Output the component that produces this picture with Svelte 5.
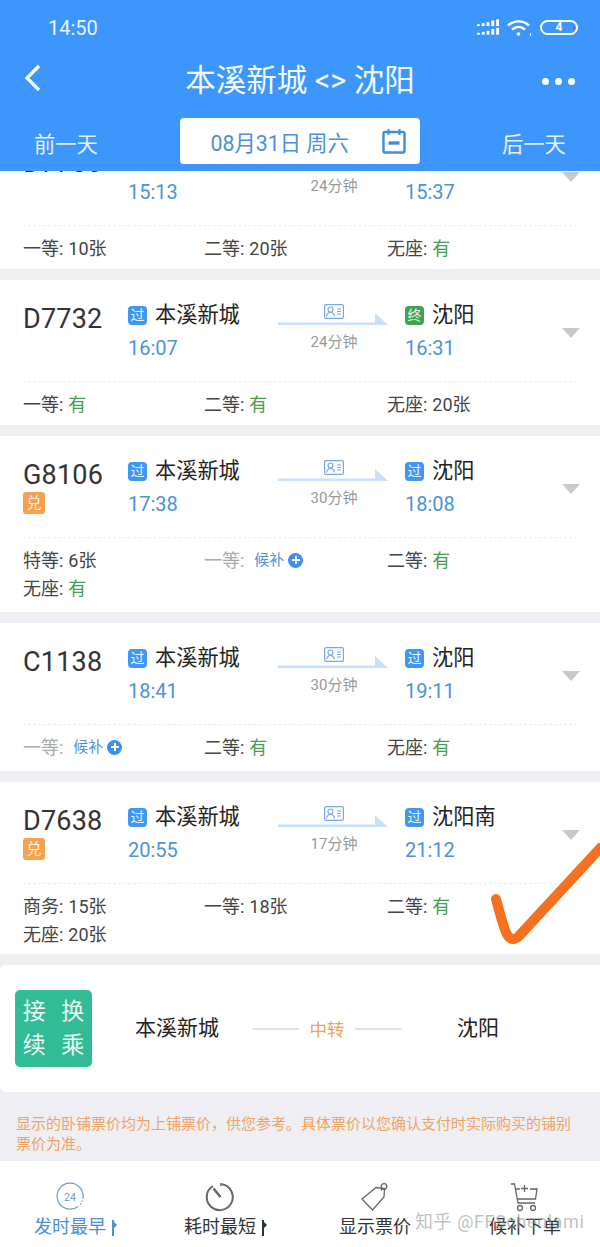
<script>
  const trains = [
    { no: 'D7730', h: 145, from: '本溪新城', fromTag: '过', to: '沈阳', toTag: '过', dep: '15:13', arr: '15:37', dur: '24分钟', seats: [[['一等', '10张']], [['二等', '20张']], [['无座', '有']]], cls: 'first' },
    { no: 'D7732', h: 145, from: '本溪新城', fromTag: '过', to: '沈阳', toTag: '终', dep: '16:07', arr: '16:31', dur: '24分钟', seats: [[['一等', '有']], [['二等', '有']], [['无座', '20张']]] },
    { no: 'G8106', h: 176, dui: true, from: '本溪新城', fromTag: '过', to: '沈阳', toTag: '过', dep: '17:38', arr: '18:08', dur: '30分钟', seats: [[['特等', '6张'], ['无座', '有']], [['一等', 'wait']], [['二等', '有']]] },
    { no: 'C1138', h: 148, from: '本溪新城', fromTag: '过', to: '沈阳', toTag: '过', dep: '18:41', arr: '19:11', dur: '30分钟', seats: [[['一等', 'wait']], [['二等', '有']], [['无座', '有']]] },
    { no: 'D7638', h: 172, dui: true, from: '本溪新城', fromTag: '过', to: '沈阳南', toTag: '过', dep: '20:55', arr: '21:12', dur: '17分钟', seats: [[['商务', '15张'], ['无座', '20张']], [['一等', '18张']], [['二等', '有']]] }
  ];
</script>

<div class="screen">
  <header class="header">
    <div class="status">
      <span class="clock">14:50</span>
      <div class="status-icons">
        <svg width="23" height="18" viewBox="0 0 24 18" fill="#fff">
          <rect x="0" y="5" width="3" height="2"/><rect x="5" y="4" width="3" height="3"/><rect x="10" y="3" width="3" height="4"/><rect x="15" y="1" width="3" height="6"/><rect x="20" y="0" width="3" height="7"/>
          <rect x="0" y="14" width="3" height="2"/><rect x="5" y="13" width="3" height="3"/><rect x="10" y="12" width="3" height="4"/><rect x="15" y="10" width="3" height="6"/><rect x="20" y="9" width="3" height="7"/>
        </svg>
        <svg class="wifi" width="25" height="18" viewBox="0 0 25 18" fill="none" stroke="#fff" stroke-width="2.4">
          <path d="M1 6.500C7 1 16 1 22 6.500"/><path d="M5 10.500C9 7 14 7 18 10.500"/><circle cx="11.500" cy="15" r="1.800" fill="#fff" stroke="none"/><rect x="23" y="14" width="1" height="3" fill="#fff" stroke="none"/>
        </svg>
        <span class="battery">4<i></i></span>
      </div>
    </div>
    <div class="nav">
      <svg class="back" width="18" height="28" viewBox="0 0 18 28" fill="none" stroke="#fff" stroke-width="3.2"><path d="M15 2 3 14l12 12"/></svg>
      <h1>本溪新城 &lt;&gt; 沈阳</h1>
      <div class="dots"><i></i><i></i><i></i></div>
    </div>
    <div class="dates">
      <span class="side">前一天</span>
      <div class="picker">
        <span>08月31日 周六</span>
        <svg width="24" height="26" viewBox="0 0 24 26" fill="none" stroke="#3d8fdc" stroke-width="2.4">
          <rect x="1.500" y="4" width="21" height="20.500" rx="1.500"/><path d="M6.500 1v6M17.500 1v6" stroke-width="2"/><path d="M6.500 15h11" stroke-width="3.400"/>
        </svg>
      </div>
      <span class="side">后一天</span>
    </div>
  </header>

  <main class="list">
    {#each trains as t}
      <section class="card {t.cls ?? ''}" style="height:{t.h}px">
        <div class="route">
          <div class="no">
            <div class="code">{t.no}</div>
            {#if t.dui}<span class="dui">兑</span>{/if}
          </div>
          <div class="stop from">
            <div class="station"><span class="tag">{t.fromTag}</span>{t.from}</div>
            <div class="time">{t.dep}</div>
          </div>
          <div class="mid">
            <svg class="id" width="20" height="15" viewBox="0 0 20 15" fill="none" stroke="#74a9e6" stroke-width="1.200">
              <rect x=".6" y=".6" width="18.800" height="13.800" rx="1.500"/><circle cx="6.500" cy="5.500" r="2.500"/><path d="M2.500 12.500c.5-3 2-4 4-4s3.500 1 4 4M13 5h4M13 7.500h4M13 10h4"/>
            </svg>
            <svg class="arrow" width="112" height="14" viewBox="0 0 112 14"><path d="M0 10.500h97V1l13 12H0z" fill="#c7e0fb"/></svg>
            <div class="dur">{t.dur}</div>
          </div>
          <div class="stop to">
            <div class="station"><span class="tag" class:end={t.toTag === '终'}>{t.toTag}</span>{t.to}</div>
            <div class="time">{t.arr}</div>
          </div>
          <span class="caret"></span>
        </div>
        <div class="seats">
          {#each t.seats as col}
            <div class="col">
              {#each col as [name, val]}
                {#if val === 'wait'}
                  <div class="seat none">{name}: <span class="wait">候补</span><span class="plus"></span></div>
                {:else}
                  <div class="seat">{name}: <span class:ok={val === '有'}>{val}</span></div>
                {/if}
              {/each}
            </div>
          {/each}
        </div>
      </section>
    {/each}

    <section class="transfer">
      <div class="badge"><span>接</span><span>换</span><span>续</span><span>乘</span></div>
      <span class="tstation a">本溪新城</span>
      <div class="link"><i></i><b>中转</b><i></i></div>
      <span class="tstation b">沈阳</span>
    </section>

    <p class="notice">显示的卧铺票价均为上铺票价，供您参考。具体票价以您确认支付时实际购买的铺别票价为准。</p>
  </main>

  <nav class="tabs">
    <div class="tab active">
      <svg width="28" height="28" viewBox="0 0 28 28" fill="none" stroke="#6c9ad6" stroke-width="1.200">
        <path d="M22 23.500A13 13 0 1 1 26.800 16"/><path d="M26.500 17.500 23.500 23" stroke-dasharray="1.500 1.500"/>
        <text x="14" y="18" text-anchor="middle" fill="#6c9ad6" stroke="none" font-size="10.500" font-family="Roboto">24</text>
      </svg>
      <span class="tlabel">发时最早<i></i></span>
    </div>
    <div class="tab">
      <svg width="30" height="30" viewBox="0 0 30 30" fill="none" stroke="#666" stroke-width="2">
        <path d="M17 2.300A13 13 0 1 1 8 4"/><path d="M8.500 6.500 15.500 15" stroke-width="2.600"/><path d="M16 1v3" stroke-width="1.500"/>
      </svg>
      <span class="tlabel">耗时最短<i></i></span>
    </div>
    <div class="tab">
      <svg width="30" height="30" viewBox="0 0 30 30" fill="none" stroke="#666" stroke-width="1.300">
        <path d="M2 17 16 5.500l8.500 1-.5 8.500L12.500 28z"/><circle cx="24" cy="4.500" r="2.800"/><path d="M21 8.500l1.500-2"/>
      </svg>
      <span class="tlabel">显示票价</span>
    </div>
    <div class="tab">
      <svg width="30" height="30" viewBox="0 0 30 30" fill="none" stroke="#666" stroke-width="1.300">
        <path d="M1 2h3.500L8 21h17"/><path d="M5 7h5M20 7h7l-1.500 10H7.500"/><path d="M14.500 3v7M11 6.500h7"/><circle cx="10" cy="26" r="2.500"/><circle cx="23" cy="26" r="2.500"/>
      </svg>
      <span class="tlabel">候补下单</span>
    </div>
  </nav>

  <span class="watermark">知乎 @FFSchenlami</span>

  <svg class="check" width="110" height="108" viewBox="0 0 110 108" fill="none">
    <path d="M6 56C10 70 14 88 18 93 21 97 25 97 29 93L115 0" stroke="#f5701f" stroke-width="10" stroke-linecap="round" stroke-linejoin="round"/>
  </svg>
</div>

<style>
  :global(body) { margin: 0; background: #eeeef3; }
  .screen {
    position: relative; width: 600px; height: 1247px; overflow: hidden;
    display: flex; flex-direction: column; background: #eeeef3;
    font-family: Roboto, "Noto Sans CJK SC", sans-serif; color: #333;
  }
  .header { height: 171px; flex: none; background: #3d97fb; color: #fff; position: relative; z-index: 1; }
  .status { height: 56px; display: flex; align-items: center; justify-content: space-between; padding: 0 22px 1px 48px; box-sizing: border-box; }
  .clock { font-size: 20px; color: #e8f3ff; }
  .status-icons { display: flex; align-items: center; gap: 7px; }
  .wifi { margin-right: 1px; }
  .battery {
    width: 34px; height: 11px; border: 2px solid #fff; border-radius: 8px; font-size: 12px; font-weight: 700;
    line-height: 11px; text-align: center; position: relative;
  }
  .battery i { position: absolute; right: 1px; top: 5px; width: 2px; height: 2px; background: #c2305c; }
  .nav { height: 50px; display: flex; align-items: center; justify-content: space-between; padding: 0 25px 0 24px; position: relative; }
  .nav h1 { position: absolute; left: 0; right: 0; top: 0; margin: 0; text-align: center; font-size: 30.500px; font-weight: 400; line-height: 50px; color: #f4f9ff; }
  .back { position: relative; top: -3px; }
  .dots { display: flex; gap: 6px; }
  .dots i { width: 7px; height: 7px; border-radius: 50%; background: #fff; }
  .dates { display: flex; justify-content: space-between; align-items: center; padding: 12px 34px 0; }
  .side { font-size: 21.300px; color: #e6f1ff; width: 64px; white-space: nowrap; position: relative; top: 1px; }
  .picker {
    width: 240px; height: 46px; background: #fff; border-radius: 4px; display: flex; align-items: center; justify-content: space-between;
    box-sizing: border-box; padding: 0 14px 0 31px; color: #4b90d8; font-size: 21.300px; margin-left: 16px; margin-right: 17px;
  }
  .list { flex: 1; min-height: 0; display: flex; flex-direction: column; gap: 11px; overflow: hidden; }
  .card { background: #fff; padding: 23px 0 0; flex: none; box-sizing: border-box; position: relative; }
  .card.first { margin-top: -47px; }
  .route { display: flex; height: 79px; position: relative; border-bottom: 1px dashed #ebebeb; margin: 0 23px; box-sizing: border-box; }
  .no { width: 105px; flex: none; }
  .code { font-size: 27px; line-height: 32px; margin-top: 0; color: #333; letter-spacing: .2px; }
  .dui { display: block; width: 22px; height: 22px; border-radius: 3px; background: #f9a24d; color: #fff3e5; text-align: center; font-size: 15px; line-height: 22px; margin-top: 1px; }
  .stop { flex: none; margin-top: -1px; }
  .from { width: 150px; }
  .station { display: flex; align-items: center; font-size: 21.200px; line-height: 26px; color: #222; white-space: nowrap; }
  .tag { width: 19px; height: 19px; border-radius: 4px; background: #3f97f5; color: #e7f3ff; font-size: 14px; line-height: 19px; text-align: center; margin-right: 8px; }
  .tag.end { background: #3ea34b; }
  .time { font-size: 20px; line-height: 26px; margin-top: 7px; color: #4b93dc; }
  .mid { position: absolute; left: 255px; top: 0; width: 112px; text-align: center; }
  .id { display: block; margin: 1px auto 0 46px; }
  .arrow { display: block; margin-top: -7px; }
  .dur { font-size: 15px; color: #999; line-height: 18px; margin-top: 7px; }
  .to { position: absolute; left: 382px; top: 0; margin-top: -1px; }
  .caret { position: absolute; right: -3px; top: 25px; width: 0; height: 0; border: 9px solid transparent; border-top: 10px solid #c9c9c9; border-bottom: 0; }
  .seats { display: flex; padding: 8px 23px 0; font-size: 18px; line-height: 29px; color: #444; }
  .col { width: 181px; flex: none; }
  .col:nth-child(2) { width: 183px; }
  .seat { height: 28px; white-space: nowrap; display: flex; align-items: center; gap: 5px; }
  .ok { color: #4a9c52; }
  .none { color: #aaa; }
  .wait { color: #4f94d8; font-size: 15px; margin-left: 5px; }
  .plus { width: 15px; height: 15px; border-radius: 50%; background: #3d90ec; position: relative; margin-left: -1px; }
  .plus::before, .plus::after { content: ""; position: absolute; background: #fff; }
  .plus::before { left: 3.500px; top: 6.500px; width: 8px; height: 2px; }
  .plus::after { left: 6.500px; top: 3.500px; width: 2px; height: 8px; }
  .transfer { height: 127px; flex: none; background: #fff; border-radius: 6px 0 0 6px; display: flex; align-items: center; position: relative; }
  .badge { width: 77px; height: 77px; margin-left: 15px; background: #32bc95; border-radius: 5px; display: grid; grid-template-columns: 1fr 1fr; justify-items: center; align-items: center; padding: 5px 0; box-sizing: border-box; color: #eafaf5; font-size: 23px; line-height: 33px; }
  .tstation { position: absolute; top: 0; font-size: 21px; line-height: 127px; color: #222; }
  .a { left: 135px; }
  .b { left: 457px; }
  .link { position: absolute; left: 252px; width: 150px; display: flex; align-items: center; justify-content: space-between; }
  .link i { width: 47px; height: 2px; background: #e5e5e5; }
  .link b { font-weight: 400; font-size: 17.500px; color: #f0a24e; }
  .notice { margin: -11px 0 0; height: 69px; flex: none; box-sizing: border-box; padding: 22px 15px 0 16px; font-size: 15px; line-height: 20px; color: #eda566; }
  .tabs { height: 86px; flex: none; background: #fff; display: grid; grid-template-columns: 140px 160px 150px 150px; position: relative; z-index: 1; }
  .tab { display: flex; flex-direction: column; align-items: center; padding-top: 21px; color: #333; }
  .tab svg { height: 30px; }
  .tab.active { color: #4b90d8; }
  .tlabel { font-size: 18px; line-height: 24px; margin-top: 3px; white-space: nowrap; position: relative; }
  .tlabel i { position: absolute; right: -8px; top: 5px; width: 2px; height: 16px; background: currentColor; }
  .tlabel i::after { content: ""; position: absolute; left: 2px; top: 2px; border-left: 3px solid currentColor; border-top: 3px solid transparent; border-bottom: 3px solid transparent; }
  .watermark { position: absolute; left: 415px; top: 1209px; font-size: 18px; line-height: 26px; color: rgba(150,150,150,.6); z-index: 2; letter-spacing: .6px; white-space: nowrap; }
  .check { position: absolute; right: 0; top: 843px; z-index: 2; }
</style>
